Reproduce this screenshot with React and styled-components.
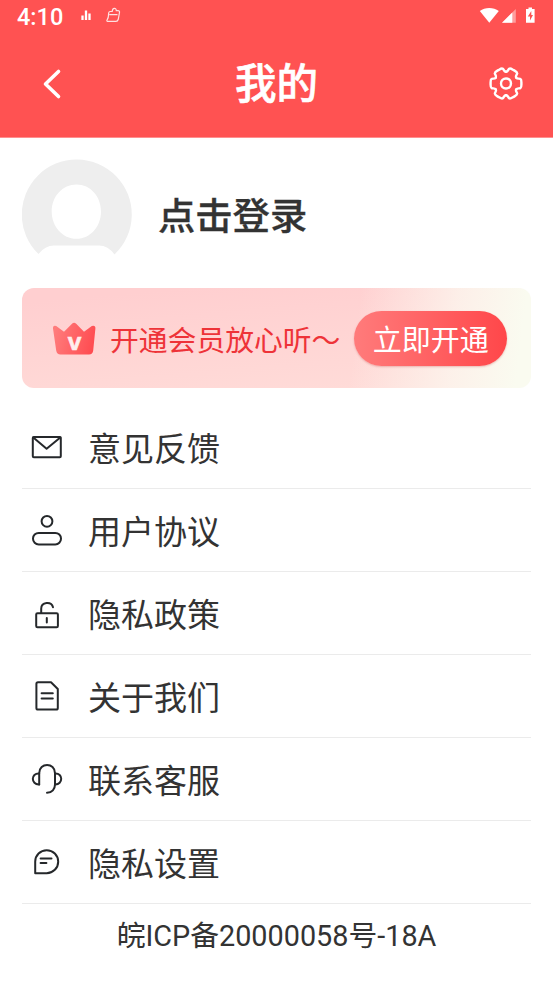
import React from 'react'
import styled, { createGlobalStyle } from 'styled-components'

const GlobalStyle = createGlobalStyle`
  * {
    box-sizing: border-box;
  }

  body {
    margin: 0;
    background: #fff;
    color: #333;
    font-family: Roboto, "Noto Sans CJK SC", sans-serif;
  }

  svg {
    display: block;
    flex-shrink: 0;
  }
`

const Page = styled.div`
  width: 553px;
  height: 983px;
  overflow: hidden;
  background: #fff;
`

const Header = styled.header`
  height: 138px;
  background: #ff5252;
  color: #fff;
  border-bottom: 1px solid #ff8f8f;
`

const StatusBar = styled.div`
  height: 30px;
  padding: 2px 18px 0 17px;
  display: flex;
  align-items: center;
  justify-content: space-between;
`

const StatusGroup = styled.div`
  display: flex;
  align-items: center;
`

const Clock = styled.span`
  width: 63px;
  padding-top: 2px;
  font-size: 23.5px;
  line-height: 28px;
  font-weight: 500;
`

const NavBar = styled.div`
  height: 107px;
  padding: 0 29px;
  display: grid;
  grid-template-columns: 36px 1fr 36px;
  align-items: center;
`

const IconButton = styled.button`
  padding: 0;
  border: none;
  background: none;
  color: inherit;
  cursor: pointer;
`

const Title = styled.h1`
  margin: 0;
  padding-top: 3px;
  text-align: center;
  font-size: 41.5px;
  line-height: 60px;
  font-weight: 500;
  -webkit-text-stroke: 0.6px #fff;
`

const Content = styled.main`
  padding: 0 22px;
`

const Profile = styled.div`
  height: 150px;
  padding-top: 21px;
  display: flex;
  gap: 26px;
`

const LoginText = styled.div`
  font-size: 37.3px;
  line-height: 54px;
  margin-top: 31px;
  font-weight: 500;
  -webkit-text-stroke: 0.3px #333;
`

const Banner = styled.section`
  height: 100px;
  padding: 0 24px 0 30px;
  border-radius: 12px;
  display: flex;
  align-items: center;
  background:
    linear-gradient(97deg, rgba(251, 250, 240, 0) 65%, rgba(252, 246, 238, 0.8) 84%, #fafbf0 97%),
    linear-gradient(175deg, #ffcfd0 10%, #ffdbd8 90%);
`

const BannerText = styled.div`
  width: 245px;
  margin-left: 14px;
  padding-top: 5px;
  font-size: 28.8px;
  line-height: 42px;
  color: #ee3338;
  white-space: nowrap;
`

const OpenButton = styled.button`
  width: 153px;
  height: 55px;
  padding: 5px 0 0;
  border: none;
  border-radius: 28px;
  background: linear-gradient(90deg, #ff7b7b, #ff474a);
  box-shadow: 0 1px 2px rgba(190, 60, 60, 0.3);
  color: #fff;
  font-family: inherit;
  font-size: 29px;
  line-height: 42px;
  cursor: pointer;
`

const Menu = styled.ul`
  margin: 18px 0 0;
  padding: 0;
  list-style: none;
`

const MenuItem = styled.li`
  height: 83px;
  padding-left: 8px;
  display: flex;
  align-items: center;
  gap: 24px;
  border-bottom: 1px solid #ebebeb;
  font-size: 33px;
  line-height: 48px;
`

const MenuName = styled.span`
  padding-top: 6px;
`

const MenuIcon = styled.svg`
  width: 34px;
  height: 34px;
  fill: none;
  stroke: #25282b;
  stroke-width: 2;
  stroke-linecap: round;
  stroke-linejoin: round;
`

const Footer = styled.footer`
  padding-top: 11px;
  text-align: center;
  font-size: 28.8px;
  line-height: 42px;
`

const menus = [
  {
    name: '意见反馈',
    icon: (
      <>
        <rect x="2.8" y="7" width="28" height="20.2" rx="1" />
        <path d="M3.3 7.5L16.6 18.8L30.3 7.5" />
      </>
    ),
  },
  {
    name: '用户协议',
    icon: (
      <>
        <circle cx="17" cy="8.3" r="5.4" />
        <rect x="3" y="19.9" width="28" height="11.5" rx="5.7" />
      </>
    ),
  },
  {
    name: '隐私政策',
    icon: (
      <>
        <rect x="6.2" y="17.2" width="21.7" height="14" rx="1.3" />
        <path d="M11.2 17V12.8C11.2 5.6 21.5 5.2 23 11.2M16.8 22V26.5" />
      </>
    ),
  },
  {
    name: '关于我们',
    icon: (
      <>
        <path d="M8 3.2H21L27.8 10V29Q27.8 30.6 26.2 30.6H8Q6.4 30.6 6.4 29V4.8Q6.4 3.2 8 3.2Z" />
        <path d="M11.6 14.2H22.8M11.6 19.4H22.8" />
      </>
    ),
  },
  {
    name: '联系客服',
    icon: (
      <>
        <path d="M9.2 22.4V11.2C9.2 0.2 25 0.2 25 11.2V22.4C25 27 22 30.8 17 30.8" />
        <path d="M9.2 11.4C0.7 10.8 0.7 22.8 9.2 22.4M25 11.4C33.3 10.8 33.3 22.8 25 22.4" />
      </>
    ),
  },
  {
    name: '隐私设置',
    icon: (
      <>
        <path d="M5.2 28.2V16.7A11.5 11.5 0 1 1 16.7 28.2Z" />
        <path d="M10.6 13.4H21.5M10.6 18H16.4" />
      </>
    ),
  },
]

const NoticeIcons = () => (
  <svg width="42" height="18" viewBox="80 7 42 18" fill="none">
    <path d="M82.5 15.5V20M86 10.5V20M89.5 13.5V20" stroke="#fff" strokeWidth="2.3" />
    <path
      d="M110 11.5H112.2C112.4 7.5 116.3 7.5 116.3 10.7H118Q119.8 10.7 119.5 12.5L118.2 19.5Q117.7 21.3 116 21.3H107.5Q106.3 21 107.3 19.5C109 17.5 108.2 15 108.7 12.8Q109 11.5 110 11.5ZM109.3 14.7H117.5"
      stroke="#ffe0e0"
      strokeWidth="1.2"
    />
  </svg>
)

const SystemIcons = () => (
  <svg width="56" height="18" viewBox="479 6 56 18">
    <path d="M479.8 10C485 6 493.5 6 498.8 10L489.3 21.8Z" fill="#fff" />
    <path d="M515.8 8V21.8H502Z" fill="#ff9d9d" />
    <path d="M512.3 11.5V21.8H502Z" fill="#fff" />
    <path d="M528.5 6.5H532V8H534.6V21.8H526V8H528.5Z" fill="#fff" />
    <path d="M531.3 10L527.8 15.5H530V19.5L533 14H531.3Z" fill="#ff5252" />
  </svg>
)

const BackIcon = () => (
  <svg width="46" height="32" viewBox="-13 0 46 32" fill="none">
    <path d="M16.5 3.5L3.5 16L16.5 28.5" stroke="#fff" strokeWidth="3.6" strokeLinecap="round" strokeLinejoin="round" />
  </svg>
)

// one tooth with half a valley on each side, repeated six times
const teeth = [0, 60, 120, 180, 240, 300]

const GearIcon = () => (
  <svg width="36" height="36" viewBox="-18 -17.5 36 36" fill="none" stroke="#fff" strokeWidth="2.4" strokeLinecap="round">
    {teeth.map((angle) => (
      <path
        key={angle}
        transform={`rotate(${angle})`}
        d="M10.2 -5.89C11.4 -4 13.2 -5.4 14.5 -4.5C15.6 -3.8 15.4 -2.5 15.4 0C15.4 2.5 15.6 3.8 14.5 4.5C13.2 5.4 11.4 4 10.2 5.89"
      />
    ))}
    <circle r="5" />
  </svg>
)

const Avatar = () => (
  <svg width="110" height="98" viewBox="0 0.5 110 98">
    <path
      fill="#eee"
      fillRule="evenodd"
      d="M16.5 95.5A55 55 0 1 1 92.5 96Q86 87 77 87H32Q23 87 16.5 95.5ZM54.5 26C40.5 26 29.7 38 29.7 53S40.5 80.3 54.5 80.3S79 68 79 53S68.5 26 54.5 26Z"
    />
  </svg>
)

const CrownIcon = () => (
  <svg width="44" height="34" viewBox="0 -1 44 34">
    <defs>
      <linearGradient id="crown" x1="0" y1="0.4" x2="1" y2="0.6">
        <stop offset="0" stopColor="#ff7c7c" />
        <stop offset="1" stopColor="#ff4b50" />
      </linearGradient>
    </defs>
    <path
      fill="url(#crown)"
      d="M4.2 4L12 9.8L20 1.7Q22 -0.2 24.2 1.7L32 9.8L39.8 4Q43.6 2.9 43.4 6.5L41.2 28.5Q40.7 32.6 37 32.6H8.5Q4.8 32.6 4.2 28.5L1 6.5Q0.8 2.9 4.2 4Z"
    />
    <text
      x="22.5"
      y="27.5"
      textAnchor="middle"
      fontFamily="Liberation Sans, sans-serif"
      fontSize="24.5"
      fontWeight="700"
      fill="#ffeded"
      stroke="#ffeded"
      strokeWidth="0.6"
    >
      v
    </text>
  </svg>
)

const App = () => {
  return (
    <>
      <GlobalStyle />
      <Page>
        <Header>
          <StatusBar>
            <StatusGroup>
              <Clock>4:10</Clock>
              <NoticeIcons />
            </StatusGroup>
            <SystemIcons />
          </StatusBar>
          <NavBar>
            <IconButton aria-label="返回">
              <BackIcon />
            </IconButton>
            <Title>我的</Title>
            <IconButton aria-label="设置">
              <GearIcon />
            </IconButton>
          </NavBar>
        </Header>

        <Content>
          <Profile>
            <Avatar />
            <LoginText>点击登录</LoginText>
          </Profile>

          <Banner>
            <CrownIcon />
            <BannerText>开通会员放心听～</BannerText>
            <OpenButton>立即开通</OpenButton>
          </Banner>

          <Menu>
            {menus.map((menu) => (
              <MenuItem key={menu.name}>
                <MenuIcon viewBox="0 0 34 34">{menu.icon}</MenuIcon>
                <MenuName>{menu.name}</MenuName>
              </MenuItem>
            ))}
          </Menu>

          <Footer>皖ICP备20000058号-18A</Footer>
        </Content>
      </Page>
    </>
  )
}

export default App
